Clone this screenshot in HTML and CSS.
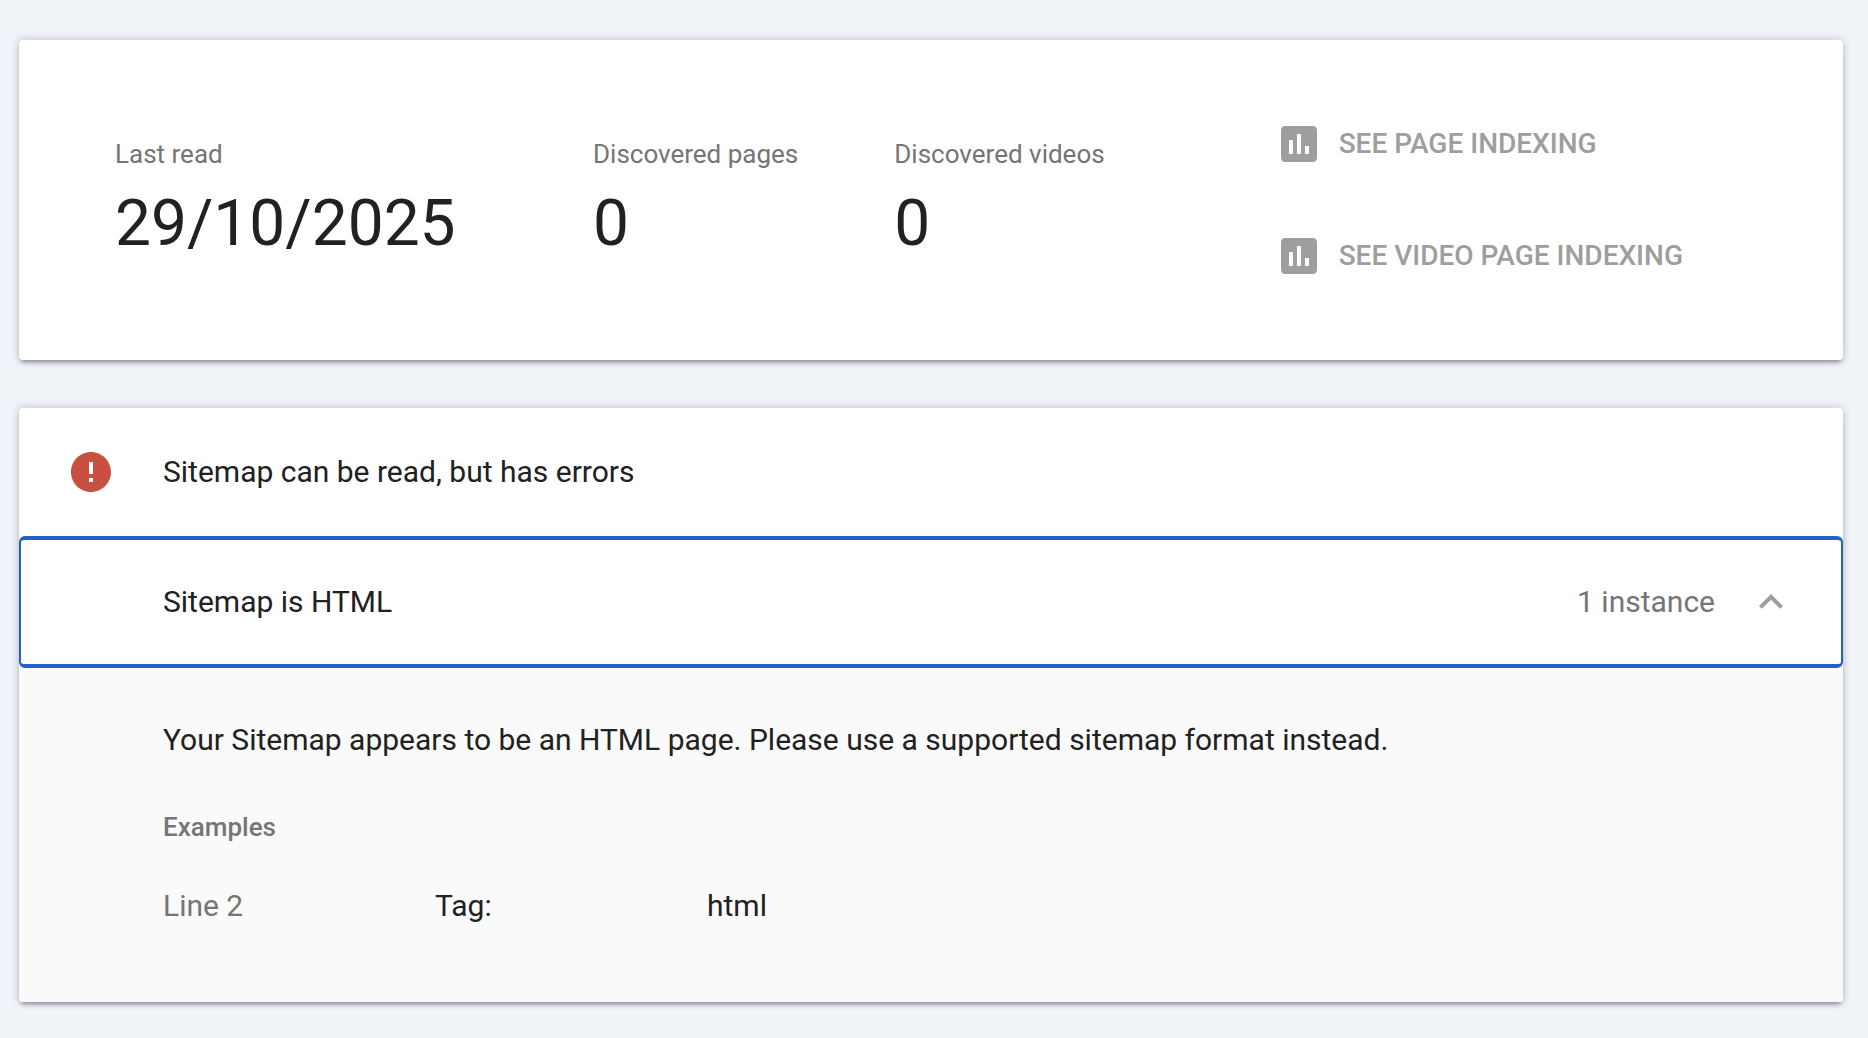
FILE: index.html
```html
<!DOCTYPE html>
<html lang="en">
<head>
<meta charset="utf-8">
<meta name="viewport" content="width=device-width, initial-scale=1">
<title>Sitemap details</title>
<link rel="stylesheet" href="styles.css">
</head>
<body>
<main class="page">
  <section class="card summary" aria-label="Sitemap summary">
    <dl class="stats">
      <div class="stat stat-date">
        <dt class="stat-label">Last read</dt>
        <dd class="stat-value">29/10/2025</dd>
      </div>
      <div class="stat">
        <dt class="stat-label">Discovered pages</dt>
        <dd class="stat-value">0</dd>
      </div>
      <div class="stat">
        <dt class="stat-label">Discovered videos</dt>
        <dd class="stat-value">0</dd>
      </div>
    </dl>
    <div class="actions">
      <button class="action" type="button" disabled>
        <svg class="icon" viewBox="0 0 24 24" aria-hidden="true"><path d="M19 3H5c-1.100 0-2 .9-2 2v14c0 1.100.9 2 2 2h14c1.100 0 2-.9 2-2V5c0-1.100-.9-2-2-2zM9 17H7v-7h2v7zm4 0h-2V7h2v10zm4 0h-2v-4h2v4z"/></svg>
        SEE PAGE INDEXING
      </button>
      <button class="action" type="button" disabled>
        <svg class="icon" viewBox="0 0 24 24" aria-hidden="true"><path d="M19 3H5c-1.100 0-2 .9-2 2v14c0 1.100.9 2 2 2h14c1.100 0 2-.9 2-2V5c0-1.100-.9-2-2-2zM9 17H7v-7h2v7zm4 0h-2V7h2v10zm4 0h-2v-4h2v4z"/></svg>
        SEE VIDEO PAGE INDEXING
      </button>
    </div>
  </section>

  <section class="card issues" aria-labelledby="status">
    <header class="status">
      <svg class="icon icon-error" viewBox="0 0 24 24" aria-hidden="true"><path d="M12 2C6.480 2 2 6.480 2 12s4.480 10 10 10 10-4.480 10-10S17.520 2 12 2zm1 15h-2v-2h2v2zm0-4h-2V7h2v6z"/></svg>
      <h1 class="status-text" id="status">Sitemap can be read, but has errors</h1>
    </header>
    <button class="issue" type="button" aria-expanded="true" aria-controls="issue-detail">
      <span class="issue-name">Sitemap is HTML</span>
      <span class="issue-count">1 instance</span>
      <svg class="icon icon-chevron" viewBox="0 0 24 24" aria-hidden="true"><path d="M12 8l-6 6 1.410 1.410L12 10.830l4.590 4.580L18 14z"/></svg>
    </button>
    <div class="detail" id="issue-detail">
      <p class="message">Your Sitemap appears to be an HTML page. Please use a supported sitemap format instead.</p>
      <h2 class="examples-title" id="examples">Examples</h2>
      <table class="examples" aria-labelledby="examples">
        <tbody>
          <tr>
            <td class="line">Line 2</td>
            <th class="key" scope="row">Tag:</th>
            <td>html</td>
          </tr>
        </tbody>
      </table>
    </div>
  </section>
</main>
</body>
</html>
```
FILE: styles.css
```css
* {
  box-sizing: border-box;
}

body {
  margin: 0;
  background: #f0f3f8;
  color: #212121;
  font-family: Roboto, "Liberation Sans", sans-serif;
  font-size: 30px;
  line-height: 40px;
}

.page {
  display: flex;
  flex-direction: column;
  gap: 48px;
  padding: 40px 25px 36px 19px;
}

.card {
  background: #fff;
  border-radius: 4px;
  box-shadow: 0 4px 4px -2px rgba(0, 0, 0, 0.35), 0 0 8px rgba(40, 40, 60, 0.2), 0 2px 12px rgba(0, 0, 0, 0.06);
}

.icon {
  flex: none;
  width: 48px;
  height: 48px;
  fill: currentColor;
}

.summary {
  display: flex;
  flex-wrap: wrap;
  align-items: center;
  gap: 48px 170px;
  padding: 80px 96px;
}

.stats {
  display: flex;
  flex-wrap: wrap;
  gap: 32px 96px;
  margin: 0;
}

.stat-date {
  min-width: 382px;
}

.stat-label {
  color: #757575;
  font-size: 26px;
  line-height: 48px;
}

.stat-value {
  margin: 0;
  font-size: 64px;
  line-height: 92px;
}

.actions {
  display: flex;
  flex-direction: column;
  gap: 64px;
}

.action {
  display: flex;
  align-items: center;
  gap: 16px;
  padding: 0;
  border: 0;
  background: none;
  color: #9e9e9e;
  font: 500 28px/48px Roboto, "Liberation Sans", sans-serif;
}

.issues {
  overflow: hidden;
}

.status {
  display: flex;
  align-items: center;
  gap: 48px;
  min-height: 128px;
  padding: 0 48px;
}

.icon-error {
  color: #c94f40;
}

.status-text {
  margin: 0;
  font-size: 30px;
  font-weight: 400;
}

.issue {
  display: flex;
  align-items: center;
  gap: 32px;
  width: 100%;
  min-height: 132px;
  padding: 0 46px 0 142px;
  border: solid #255fc8;
  border-width: 4px 2px;
  border-radius: 6px;
  background: #fff;
  color: inherit;
  font: inherit;
  text-align: left;
}

.issue-name {
  flex: 1;
}

.issue-count {
  color: #757575;
}

.icon-chevron {
  color: #9e9e9e;
}

.detail {
  padding: 52px 48px 76px 144px;
  background: #fafafa;
}

.message {
  margin: 0 0 47px;
}

.examples-title {
  margin: 0 0 39px;
  color: #757575;
  font-size: 26px;
  font-weight: 500;
}

.examples {
  border-collapse: collapse;
}

.examples td,
.examples th {
  padding: 0;
  font-weight: 400;
  text-align: left;
}

.examples .line,
.examples .key {
  width: 272px;
}

.line {
  color: #757575;
}
```
